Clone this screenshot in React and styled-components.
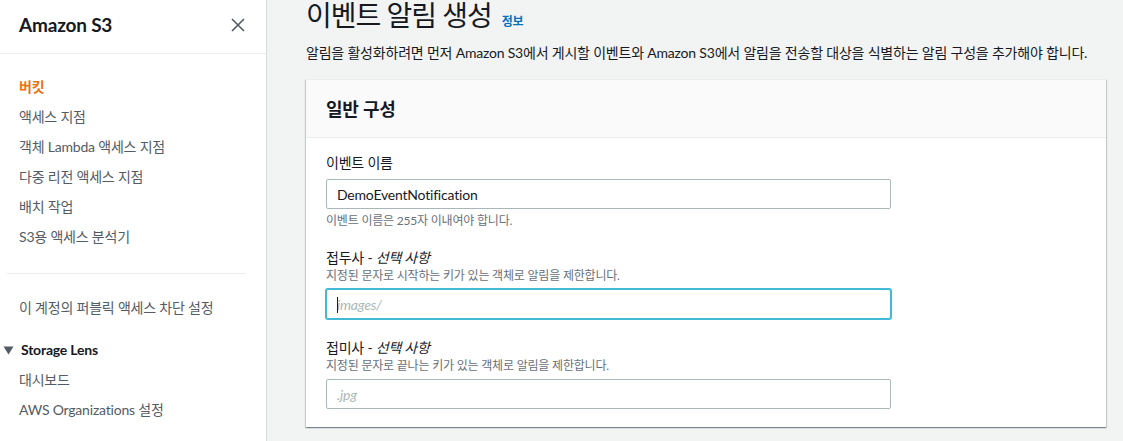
import styled, { createGlobalStyle } from "styled-components";

const GlobalStyle = createGlobalStyle`
  html, body {
    margin: 0;
    padding: 0;
    height: 441px;
    overflow: hidden;
    background: #f2f3f3;
    font-family: "Lato", "Noto Sans CJK KR", sans-serif;
    letter-spacing: -0.2px;
    color: #16191f;
  }
`;

const Page = styled.div`
  display: flex;
  height: 441px;
`;

const Sidebar = styled.nav`
  width: 267px;
  flex-shrink: 0;
  background: #fff;
  border-right: 1px solid #d5dbdb;
  box-sizing: border-box;
`;

const SideHeader = styled.div`
  height: 54px;
  display: flex;
  align-items: center;
  justify-content: space-between;
  padding: 0 18px 0 19px;
  border-bottom: 1px solid #eaeded;
  box-sizing: border-box;
`;

const Brand = styled.div`
  font-size: 19px;
  font-weight: 700;
  margin-bottom: 4px;
`;

const CloseButton = styled.button`
  border: none;
  background: none;
  padding: 0;
  width: 20px;
  height: 20px;
  display: flex;
  align-items: center;
  justify-content: center;
  color: #545b64;
  margin-bottom: 4px;
`;

const NavList = styled.ul`
  list-style: none;
  margin: 0;
  padding: ${(p) => (p.top ? "18px 0 0" : "0")};
`;

const NavItem = styled.li`
  font-size: 14px;
  line-height: 30px;
  padding-left: 19px;
  color: ${(p) => (p.active ? "#ec7211" : "#545b64")};
  font-weight: ${(p) => (p.active ? 700 : 400)};
`;

const Divider = styled.hr`
  border: none;
  border-top: 1px solid #eaeded;
  margin: 21px 20px 19px 7px;
`;

const SectionTitle = styled.div`
  display: flex;
  align-items: center;
  gap: 7px;
  font-size: 14px;
  font-weight: 700;
  line-height: 30px;
  color: #16191f;
  padding-left: 3px;
  margin-top: 12px;
`;

const Main = styled.main`
  flex: 1;
  padding: 0 0 0 39px;
  min-width: 0;
`;

const TitleRow = styled.div`
  display: flex;
  align-items: baseline;
  gap: 10px;
  margin-top: -4px;
`;

const Title = styled.h1`
  margin: 0;
  font-size: 28px;
  font-weight: 400;
  line-height: 38px;
  letter-spacing: -1px;
  color: #16191f;
`;

const InfoLink = styled.a`
  font-size: 12px;
  font-weight: 700;
  color: #0073bb;
`;

const Lead = styled.p`
  margin: 8px 0 0;
  font-size: 14px;
  line-height: 22px;
  color: #16191f;
  white-space: nowrap;
`;

const Panel = styled.section`
  margin-top: 15px;
  width: 800px;
  background: #fff;
  box-shadow: 0 1px 1px 0 rgba(0, 28, 36, 0.3), 1px 1px 1px 0 rgba(0, 28, 36, 0.15), -1px 1px 1px 0 rgba(0, 28, 36, 0.15);
  border-top: 1px solid #eaeded;
`;

const PanelHeader = styled.div`
  background: #fafafa;
  height: 58px;
  box-sizing: border-box;
  border-bottom: 1px solid #eaeded;
  display: flex;
  align-items: center;
  padding: 0 20px;
`;

const PanelTitle = styled.h2`
  margin: 0;
  font-size: 18px;
  font-weight: 700;
  line-height: 22px;
`;

const PanelBody = styled.div`
  padding: 14px 20px 18px;
  display: flex;
  flex-direction: column;
  gap: 19px;
`;

const FormField = styled.div`
  display: flex;
  flex-direction: column;
`;

const Label = styled.label`
  font-size: 14px;
  line-height: ${(p) => (p.hasDesc ? "20px" : "22px")};
  color: #16191f;
  margin-bottom: ${(p) => (p.hasDesc ? "0" : "5px")};

  em {
    font-style: italic;
  }
`;

const Description = styled.div`
  font-size: 12px;
  line-height: 16px;
  color: #687078;
  margin-bottom: 5px;
`;

const Hint = styled.div`
  font-size: 12px;
  line-height: 16px;
  color: #687078;
  margin-top: 4px;
`;

const Input = styled.div`
  position: relative;
  width: 565px;
  height: 30px;
  box-sizing: border-box;
  border: 1px solid ${(p) => (p.focused ? "#44b9d6" : "#aab7b8")};
  box-shadow: ${(p) => (p.focused ? "0 0 0 1px #44b9d6" : "none")};
  border-radius: 2px;
  background: #fff;
  padding: 0 10px;
  display: flex;
  align-items: center;
  font-size: 14px;
  color: ${(p) => (p.placeholder ? "#aab7b8" : "#16191f")};
  font-style: ${(p) => (p.placeholder ? "italic" : "normal")};

  &::before {
    content: "";
    display: ${(p) => (p.focused ? "block" : "none")};
    position: absolute;
    left: 10px;
    top: 7px;
    width: 1px;
    height: 16px;
    background: #16191f;
  }
`;

const navItems = [
  "버킷",
  "액세스 지점",
  "객체 Lambda 액세스 지점",
  "다중 리전 액세스 지점",
  "배치 작업",
  "S3용 액세스 분석기",
];

const App = () => {
  return (
    <Page>
      <GlobalStyle />
      <Sidebar>
        <SideHeader>
          <Brand>Amazon S3</Brand>
          <CloseButton aria-label="닫기">
            <svg width="16" height="16" viewBox="0 0 16 16">
              <path d="M2 2 L14 14 M14 2 L2 14" stroke="currentColor" strokeWidth="1.6" fill="none" />
            </svg>
          </CloseButton>
        </SideHeader>
        <NavList top>
          {navItems.map((item, i) => (
            <NavItem key={item} active={i === 0}>{item}</NavItem>
          ))}
        </NavList>
        <Divider />
        <NavList>
          <NavItem>이 계정의 퍼블릭 액세스 차단 설정</NavItem>
        </NavList>
        <SectionTitle>
          <svg width="11" height="9" viewBox="0 0 11 9">
            <path d="M0.5 0.5 L10.5 0.5 L5.5 8.5 Z" fill="#545b64" />
          </svg>
          Storage Lens
        </SectionTitle>
        <NavList>
          <NavItem>대시보드</NavItem>
          <NavItem>AWS Organizations 설정</NavItem>
        </NavList>
      </Sidebar>
      <Main>
        <TitleRow>
          <Title>이벤트 알림 생성</Title>
          <InfoLink>정보</InfoLink>
        </TitleRow>
        <Lead>
          알림을 활성화하려면 먼저 Amazon S3에서 게시할 이벤트와 Amazon S3에서 알림을 전송할 대상을 식별하는 알림 구성을 추가해야 합니다.
        </Lead>
        <Panel>
          <PanelHeader>
            <PanelTitle>일반 구성</PanelTitle>
          </PanelHeader>
          <PanelBody>
            <FormField>
              <Label>이벤트 이름</Label>
              <Input>DemoEventNotification</Input>
              <Hint>이벤트 이름은 255자 이내여야 합니다.</Hint>
            </FormField>
            <FormField>
              <Label hasDesc>
                접두사 - <em>선택 사항</em>
              </Label>
              <Description>지정된 문자로 시작하는 키가 있는 객체로 알림을 제한합니다.</Description>
              <Input focused placeholder>images/</Input>
            </FormField>
            <FormField>
              <Label hasDesc>
                접미사 - <em>선택 사항</em>
              </Label>
              <Description>지정된 문자로 끝나는 키가 있는 객체로 알림을 제한합니다.</Description>
              <Input placeholder>.jpg</Input>
            </FormField>
          </PanelBody>
        </Panel>
      </Main>
    </Page>
  );
};

export default App;
